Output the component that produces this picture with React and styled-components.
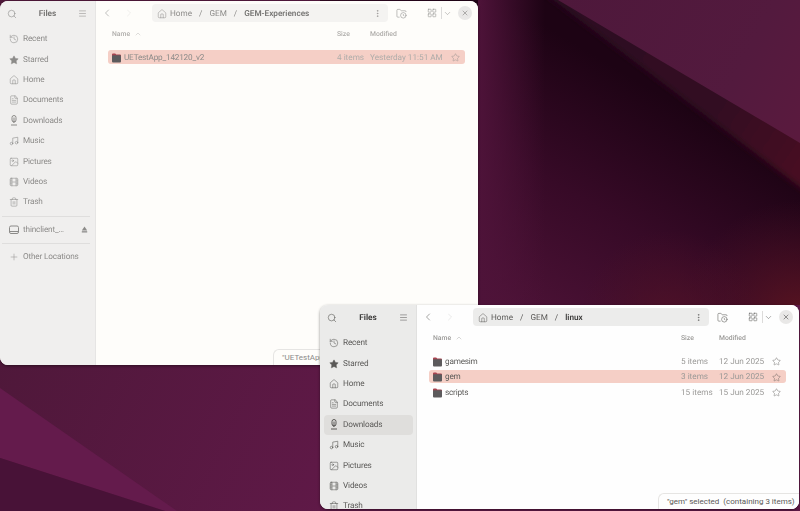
import React from "react";
import styled, { createGlobalStyle } from "styled-components";
import {
  ChevronDown,
  ChevronLeft,
  ChevronRight,
  ChevronUp,
  EllipsisVertical,
  Film,
  FileText,
  FolderClock,
  History,
  House,
  Image,
  LayoutGrid,
  Menu,
  Music,
  Plus,
  Search,
  Star,
  Trash2,
  X,
} from "lucide-react";

const GlobalStyle = createGlobalStyle`
  html, body {
    margin: 0;
    padding: 0;
    background: #54173f;
  }
  body {
    font-family: Roboto, "Noto Sans", sans-serif;
    text-rendering: geometricPrecision;
  }
`;

const Desktop = styled.div`
  position: relative;
  width: 800px;
  height: 511px;
  overflow: hidden;
`;

const Wallpaper = styled.svg`
  position: absolute;
  inset: 0;
  width: 800px;
  height: 511px;
`;

const Window = styled.div`
  --ink: ${(p) => (p.$faded ? "#8c8b89" : "#5a5957")};
  --ink-strong: ${(p) => (p.$faded ? "#777674" : "#3d3c3b")};
  --ink-soft: ${(p) => (p.$faded ? "#aeaca9" : "#9a9997")};
  --rail: ${(p) => (p.$faded ? "#f0efee" : "#ebebea")};
  --page: ${(p) => (p.$faded ? "#fefdfa" : "#fefefe")};
  --path: ${(p) => (p.$faded ? "#f4f3f1" : "#ececeb")};
  position: absolute;
  left: ${(p) => p.$left}px;
  top: ${(p) => p.$top}px;
  width: ${(p) => p.$width}px;
  height: ${(p) => p.$height}px;
  display: flex;
  overflow: hidden;
  border-radius: 8px;
  background: var(--page);
  box-shadow: 0 1px 3px rgba(0, 0, 0, 0.45);
  filter: blur(0.25px);
`;

const Sidebar = styled.aside`
  flex: 1;
  min-width: 0;
  background: var(--rail);
  box-shadow: inset -1px 0 0 rgba(0, 0, 0, 0.04);
`;

const SideHeader = styled.div`
  height: 28px;
  padding: 0 9px 3px 7px;
  box-sizing: border-box;
  display: flex;
  align-items: center;
  justify-content: space-between;
  color: var(--ink);
`;

const SideTitle = styled.span`
  font-size: 8.2px;
  font-weight: 700;
  color: var(--ink-strong);
`;

const SideRow = styled.div`
  height: 20.4px;
  margin: 0 4px;
  padding: 0 4px 0 5px;
  box-sizing: border-box;
  display: flex;
  align-items: center;
  gap: 4px;
  border-radius: 4px;
  font-size: 8.2px;
  letter-spacing: -0.15px;
  color: var(--ink);
  background: ${(p) => (p.$hover ? "#dfdedc" : "transparent")};
  white-space: nowrap;

  svg {
    flex: none;
  }
`;

const SideGap = styled.span`
  flex: 1;
`;

const SideRule = styled.div`
  height: 1px;
  margin: 3px 6px 3px 2px;
  background: #dfdedd;
`;

const Main = styled.main`
  position: relative;
  flex: none;
  width: 382px;
  background: var(--page);
`;

const Toolbar = styled.div`
  height: 24px;
  display: flex;
  align-items: center;
  color: var(--ink);
`;

const NavButton = styled.span`
  width: 22px;
  display: flex;
  justify-content: center;
  opacity: ${(p) => (p.$off ? 0.22 : 1)};
`;

const PathBar = styled.div`
  width: 236px;
  height: 18px;
  margin-left: 12px;
  padding: 1px 6px 0 5px;
  box-sizing: border-box;
  display: flex;
  align-items: center;
  gap: 3px;
  border-radius: 4px;
  background: var(--path);
  font-size: 8.2px;
  color: var(--ink);
`;

const Crumb = styled.span`
  font-weight: ${(p) => (p.$current ? 600 : 400)};
  color: ${(p) => (p.$current ? "var(--ink-strong)" : "var(--ink)")};
`;

const Slash = styled.span`
  margin: 0 4px;
`;

const ToolButton = styled.span`
  width: ${(p) => p.$width}px;
  margin-left: ${(p) => p.$gap || 0}px;
  display: flex;
  justify-content: center;
`;

const ToolRule = styled.span`
  width: 1px;
  height: 12px;
  margin-left: 2px;
  background: #dcdbda;
`;

const CloseButton = styled.span`
  width: 14px;
  height: 14px;
  margin-left: 6px;
  display: flex;
  align-items: center;
  justify-content: center;
  border-radius: 50%;
  background: #e9e8e7;
  color: var(--ink-strong);
`;

const Grid = styled.div`
  display: grid;
  grid-template-columns: ${(p) => p.$columns};
  align-items: center;
  margin: 0 13px 0 12px;
  white-space: nowrap;
`;

const ColumnHeads = styled(Grid)`
  height: 17px;
  padding-top: 1px;
  box-sizing: border-box;
  font-size: 6.8px;
  font-weight: 500;
  color: var(--ink-soft);
`;

const HeadName = styled.span`
  display: flex;
  align-items: center;
  gap: 4px;
  padding-left: 4px;
`;

const FileList = styled.div`
  margin-top: 8px;
  display: flex;
  flex-direction: column;
  gap: 2px;
`;

const FileRow = styled(Grid)`
  height: 13.5px;
  padding-top: 2px;
  box-sizing: border-box;
  border-radius: 3px;
  font-size: 8.2px;
  color: var(--ink-soft);
  background: ${(p) => (p.$selected ? "#f5cfc6" : "transparent")};
`;

const FileName = styled.span`
  display: flex;
  align-items: center;
  gap: 3px;
  padding-left: 4px;
  letter-spacing: -0.2px;
  color: var(--ink);
`;

const StarCell = styled.span`
  display: flex;
  justify-content: center;
  color: var(--ink);
`;

const Status = styled.div`
  position: absolute;
  left: ${(p) => p.$left}px;
  right: 0;
  bottom: 0;
  height: 16px;
  padding: 0 6px 0 8px;
  display: flex;
  align-items: center;
  box-sizing: border-box;
  border: 1px solid #e6e5e3;
  border-width: 1px 0 0 1px;
  border-top-left-radius: 6px;
  background: var(--page);
  font-size: 8px;
  text-rendering: auto;
  color: var(--ink);
  white-space: pre;
`;

function DownloadIcon() {
  return (
    <svg width="10" height="11" viewBox="0 0 10 11" fill="none" stroke="currentColor" strokeWidth="1">
      <rect x="3" y="0.5" width="4" height="6.5" rx="2" />
      <path d="M5 2.5v5M3.6 6l1.4 1.4L6.4 6M2 10h6" />
    </svg>
  );
}

function DriveIcon() {
  return (
    <svg width="10" height="10" viewBox="0 0 10 10" fill="none" stroke="currentColor" strokeWidth="1">
      <rect x="0.5" y="1" width="9" height="7.5" rx="1.5" />
      <path d="M1 6.5h8" />
    </svg>
  );
}

function EjectIcon() {
  return (
    <svg width="7" height="7" viewBox="0 0 7 7" fill="currentColor">
      <path d="M3.5 0.5 6.2 4.4H0.8z" />
      <rect x="0.8" y="5.2" width="5.4" height="1.3" />
    </svg>
  );
}

function FolderIcon() {
  return (
    <svg width="9" height="10" viewBox="0 0 9 10" style={{ flex: "none" }}>
      <path d="M1 0.6h2.2l1 1h3.8a1 1 0 0 1 1 1v1H0V1.6a1 1 0 0 1 1-1z" fill="#a8434f" />
      <rect y="2.2" width="9" height="7.2" rx="1" fill="#5c5a5c" />
    </svg>
  );
}

const places = [
  { label: "Recent", icon: <History size={10} strokeWidth={1.3} /> },
  { label: "Starred", icon: <Star size={10} fill="currentColor" strokeWidth={1} /> },
  { label: "Home", icon: <House size={10} strokeWidth={1.3} /> },
  { label: "Documents", icon: <FileText size={10} strokeWidth={1.3} /> },
  { label: "Downloads", icon: <DownloadIcon /> },
  { label: "Music", icon: <Music size={10} strokeWidth={1.4} /> },
  { label: "Pictures", icon: <Image size={10} strokeWidth={1.3} /> },
  { label: "Videos", icon: <Film size={10} strokeWidth={1.3} /> },
  { label: "Trash", icon: <Trash2 size={10} strokeWidth={1.3} /> },
];

function FilesWindow({ faded, left, top, width, height, crumbs, columns, files, hoverPlace, extraPlaces, status, statusLeft }) {
  return (
    <Window $faded={faded} $left={left} $top={top} $width={width} $height={height}>
      <Sidebar>
        <SideHeader>
          <Search size={10} strokeWidth={1.4} />
          <SideTitle>Files</SideTitle>
          <Menu size={9} strokeWidth={1.4} />
        </SideHeader>
        {places.map((place) => (
          <SideRow key={place.label} $hover={place.label === hoverPlace}>
            {place.icon}
            {place.label}
          </SideRow>
        ))}
        {extraPlaces && (
          <>
            <SideRule />
            <SideRow>
              <DriveIcon />
              thinclient_…
              <SideGap />
              <EjectIcon />
            </SideRow>
            <SideRule />
            <SideRow>
              <Plus size={10} strokeWidth={1.2} />
              Other Locations
            </SideRow>
          </>
        )}
      </Sidebar>
      <Main>
        <Toolbar>
          <NavButton>
            <ChevronLeft size={12} strokeWidth={1.1} />
          </NavButton>
          <NavButton $off>
            <ChevronRight size={12} strokeWidth={1.1} />
          </NavButton>
          <PathBar>
            <House size={10} strokeWidth={1.2} />
            {crumbs.map((crumb, i) => (
              <React.Fragment key={crumb}>
                {i > 0 && <Slash>/</Slash>}
                <Crumb $current={i === crumbs.length - 1}>{crumb}</Crumb>
              </React.Fragment>
            ))}
            <SideGap />
            <EllipsisVertical size={9} strokeWidth={1.5} />
          </PathBar>
          <ToolButton $width={26}>
            <FolderClock size={11} strokeWidth={1.2} />
          </ToolButton>
          <ToolButton $width={14} $gap={11}>
            <LayoutGrid size={10} strokeWidth={1.3} />
          </ToolButton>
          <ToolRule />
          <ToolButton $width={10}>
            <ChevronDown size={9} strokeWidth={1.3} />
          </ToolButton>
          <CloseButton>
            <X size={8} strokeWidth={1.6} />
          </CloseButton>
        </Toolbar>
        <ColumnHeads $columns={columns}>
          <HeadName>
            Name <ChevronUp size={8} strokeWidth={1.2} />
          </HeadName>
          <span>Size</span>
          <span>Modified</span>
        </ColumnHeads>
        <FileList>
          {files.map((file) => (
            <FileRow key={file.name} $columns={columns} $selected={file.selected}>
              <FileName>
                <FolderIcon />
                {file.name}
              </FileName>
              <span>{file.size}</span>
              <span>{file.modified}</span>
              <StarCell>
                <Star size={9} strokeWidth={1.1} />
              </StarCell>
            </FileRow>
          ))}
        </FileList>
        <Status $left={statusLeft}>{status}</Status>
      </Main>
    </Window>
  );
}

export default function App() {
  return (
    <>
      <GlobalStyle />
      <Desktop>
        <Wallpaper viewBox="0 0 800 511">
          <defs>
            <linearGradient id="shade" x1="620" y1="70" x2="487" y2="294" gradientUnits="userSpaceOnUse">
              <stop offset="0" stopColor="#1d0314" />
              <stop offset="0.5" stopColor="#370a27" />
              <stop offset="1" stopColor="#4c1236" />
            </linearGradient>
            <linearGradient id="leftFade" x1="478" y1="0" x2="545" y2="0" gradientUnits="userSpaceOnUse">
              <stop offset="0" stopColor="#4e1339" />
              <stop offset="1" stopColor="#4e1339" stopOpacity="0" />
            </linearGradient>
            <radialGradient id="ember" cx="800" cy="320" r="120" gradientUnits="userSpaceOnUse">
              <stop offset="0" stopColor="#5a141f" />
              <stop offset="1" stopColor="#4a1024" stopOpacity="0" />
            </radialGradient>
            <radialGradient id="emberLow" cx="670" cy="320" r="90" gradientUnits="userSpaceOnUse">
              <stop offset="0" stopColor="#521226" stopOpacity="0.8" />
              <stop offset="1" stopColor="#4a1024" stopOpacity="0" />
            </radialGradient>
            <linearGradient id="upper" x1="560" y1="0" x2="800" y2="130" gradientUnits="userSpaceOnUse">
              <stop offset="0" stopColor="#4e183b" />
              <stop offset="0.7" stopColor="#531a3e" />
              <stop offset="1" stopColor="#5a1a3e" />
            </linearGradient>
            <linearGradient id="ridge" x1="560" y1="10" x2="800" y2="170" gradientUnits="userSpaceOnUse">
              <stop offset="0" stopColor="#2c0a22" />
              <stop offset="0.65" stopColor="#330b24" />
              <stop offset="1" stopColor="#470e22" />
            </linearGradient>
            <linearGradient id="floor" x1="0" y1="360" x2="320" y2="511" gradientUnits="userSpaceOnUse">
              <stop offset="0" stopColor="#4f183a" />
              <stop offset="1" stopColor="#5f1947" />
            </linearGradient>
            <filter id="soft" x="-5%" y="-5%" width="110%" height="110%">
              <feGaussianBlur stdDeviation="3" />
            </filter>
          </defs>
          <rect width="800" height="511" fill="url(#floor)" />
          <rect x="320" width="480" height="305" fill="url(#shade)" />
          <polygon points="540,-10 830,210 830,140 558,-10" fill="url(#ridge)" filter="url(#soft)" />
          <rect x="478" width="70" height="305" fill="url(#leftFade)" />
          <rect x="478" width="322" height="305" fill="url(#ember)" />
          <rect x="478" width="322" height="305" fill="url(#emberLow)" />
          <polygon points="558,0 800,0 800,143" fill="url(#upper)" />
          <polygon points="0,388 177,511 165,511 0,458" fill="#641b4c" />
          <polygon points="0,458 165,511 0,511" fill="#481237" />
        </Wallpaper>
        <FilesWindow
          faded
          left={0}
          top={1}
          width={478}
          height={364}
          crumbs={["Home", "GEM", "GEM-Experiences"]}
          columns="229px 33px 1fr 20px"
          files={[{ name: "UETestApp_142120_v2", size: "4 items", modified: "Yesterday 11:51 AM", selected: true }]}
          extraPlaces
          status={'"UETestApp_142120_v2" selected  (containing 4 items)'}
          statusLeft={177}
        />
        <FilesWindow
          left={320}
          top={305}
          width={479}
          height={204}
          crumbs={["Home", "GEM", "linux"]}
          columns="252px 38px 1fr 20px"
          files={[
            { name: "gamesim", size: "5 items", modified: "12 Jun 2025" },
            { name: "gem", size: "3 items", modified: "12 Jun 2025", selected: true },
            { name: "scripts", size: "15 items", modified: "15 Jun 2025" },
          ]}
          hoverPlace="Downloads"
          status={'"gem" selected  (containing 3 items)'}
          statusLeft={241}
        />
      </Desktop>
    </>
  );
}
